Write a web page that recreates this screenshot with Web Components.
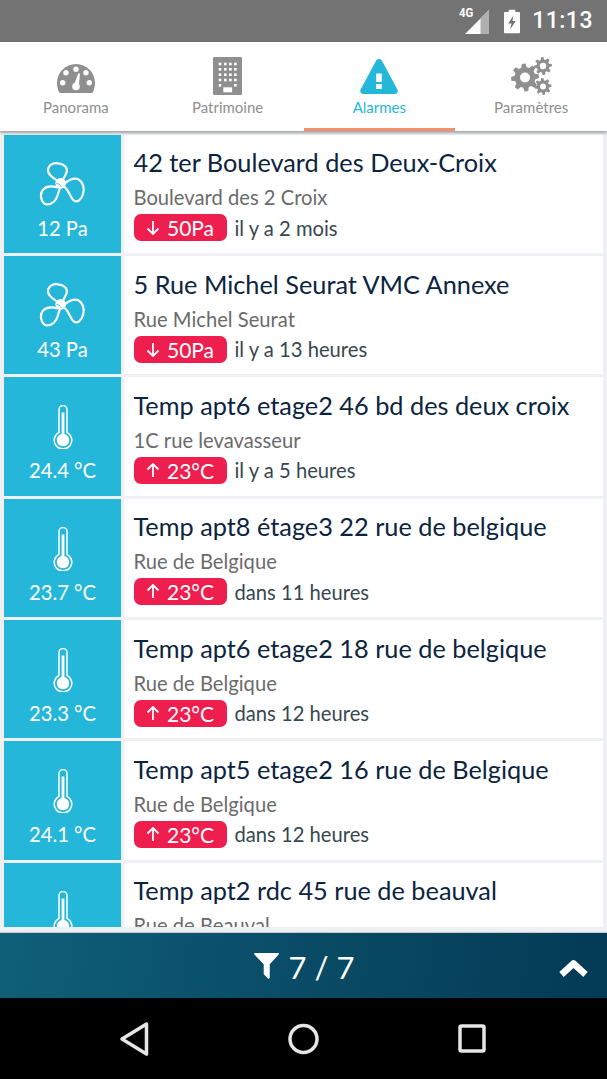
<!DOCTYPE html>
<html lang="fr"><head><meta charset="utf-8"><title>Alarmes</title>
<style>
html,body{margin:0;padding:0;height:100%;overflow:hidden}
body{width:607px;height:1079px;display:flex;flex-direction:column;font-family:Lato,"Liberation Sans",sans-serif;background:#eff0f3}
alarm-list{flex:1;min-height:0}
</style></head><body>
<status-bar></status-bar>
<tab-bar>
<tab-item label="Panorama" icon="gauge"></tab-item>
<tab-item label="Patrimoine" icon="building"></tab-item>
<tab-item label="Alarmes" icon="alert" active></tab-item>
<tab-item label="Paramètres" icon="gears"></tab-item>
</tab-bar>
<alarm-list>
<alarm-card kind="fan" value="12 Pa" title="42 ter Boulevard des Deux-Croix" sub="Boulevard des 2 Croix" dir="down" limit="50Pa" when="il y a 2 mois"></alarm-card>
<alarm-card kind="fan" value="43 Pa" title="5 Rue Michel Seurat VMC Annexe" sub="Rue Michel Seurat" dir="down" limit="50Pa" when="il y a 13 heures"></alarm-card>
<alarm-card kind="temp" value="24.4 °C" title="Temp apt6 etage2 46 bd des deux croix" sub="1C rue levavasseur" dir="up" limit="23°C" when="il y a 5 heures"></alarm-card>
<alarm-card kind="temp" value="23.7 °C" title="Temp apt8 étage3 22 rue de belgique" sub="Rue de Belgique" dir="up" limit="23°C" when="dans 11 heures"></alarm-card>
<alarm-card kind="temp" value="23.3 °C" title="Temp apt6 etage2 18 rue de belgique" sub="Rue de Belgique" dir="up" limit="23°C" when="dans 12 heures"></alarm-card>
<alarm-card kind="temp" value="24.1 °C" title="Temp apt5 etage2 16 rue de Belgique" sub="Rue de Belgique" dir="up" limit="23°C" when="dans 12 heures"></alarm-card>
<alarm-card kind="temp" title="Temp apt2 rdc 45 rue de beauval" sub="Rue de Beauval"></alarm-card>
</alarm-list>
<filter-bar></filter-bar>
<nav-bar></nav-bar>
<script>
function gear(cx,cy,ro,ri,hole,n){
  let d='';const st=Math.PI*2/n;
  for(let i=0;i<n;i++){
    const a=i*st-st/2;
    const pts=[[ri,a+st*.04],[ro,a+st*.2],[ro,a+st*.55],[ri,a+st*.71]];
    pts.forEach(([r,t],j)=>{d+=(i||j?'L':'M')+(cx+r*Math.cos(t)).toFixed(2)+' '+(cy+r*Math.sin(t)).toFixed(2)});
  }
  d+=`ZM${cx+hole} ${cy}a${hole} ${hole} 0 1 0 ${-2*hole} 0a${hole} ${hole} 0 1 0 ${2*hole} 0Z`;
  return d;
}
const bDots=[7,12.300,17.700,23].map(y=>[7,12.300,17.400,22.400].map(x=>`<rect x="${x-1.300}" y="${y-1.300}" width="2.600" height="2.600"/>`).join('')).join('')
 +[7,22.400].map(x=>`<rect x="${x-1.300}" y="27" width="2.600" height="2.600"/>`).join('');
const ICONS={
gauge:`<svg style="margin-top:4px" width="38" height="29" viewBox="0 0 38 29"><path fill="currentColor" d="M19 0C8.500 0 0 8.500 0 19c0 3 .7 6 1.700 8.500.3.8 1 1.500 1.800 1.500h31c.8 0 1.500-.7 1.800-1.500 1-2.500 1.700-5.500 1.700-8.500C38 8.500 29.500 0 19 0Z"/><g fill="#fff"><circle cx="19" cy="5.300" r="2.700"/><circle cx="9" cy="8.700" r="2.700"/><circle cx="29" cy="8.700" r="2.700"/><circle cx="5.700" cy="18.700" r="2.700"/><circle cx="32.300" cy="18.700" r="2.700"/><circle cx="19" cy="22.500" r="3.800"/><path d="M16.800 21 21.200 9.500h1.800l-1.200 12.500Z"/></g></svg>`,
building:`<svg width="29" height="38" viewBox="0 0 29 38"><rect width="29" height="38" rx="1.200" fill="currentColor"/><g fill="#fff">${bDots}<rect x="10.300" y="30.300" width="8.800" height="5"/></g></svg>`,
alert:`<svg width="38" height="35" viewBox="0 0 38 35"><path fill="currentColor" fill-rule="evenodd" d="M19 0c1.200 0 2.200.6 2.800 1.600l15.600 29c1.100 2-.3 4.400-2.600 4.400H3.200C.9 35-.5 32.600.6 30.600L16.200 1.600C16.800.6 17.800 0 19 0ZM16.200 14.500V23h5.600v-8.500ZM16.200 25v5h5.600v-5Z"/></svg>`,
gears:`<svg width="41" height="38" viewBox="0 0 41 38"><g fill="currentColor" fill-rule="evenodd"><path d="${gear(14,20.500,14,10.500,5,8)}"/><path d="${gear(32,9,9,6.500,3.200,8)}"/><path d="${gear(32,29.500,8.500,6.200,3,8)}"/></g></svg>`,
fan:`<svg width="46.700" height="45" viewBox="45 33 140 135"><g fill="none" stroke="#fff" stroke-width="6.500" stroke-linecap="round"><path d="M100 92C85 82 70 72 72 58C74 44 88 38 102 40C120 42 132 52 128 66C125 78 116 84 116 95"/><path d="M100 112C85 108 68 108 58 118C48 128 48 148 60 160C72 168 90 160 97 145C102 135 104 125 108 112"/><path d="M122 100C135 90 150 82 163 88C178 96 182 115 177 132C172 150 160 158 150 152C138 144 136 120 120 110"/></g><circle cx="110" cy="100" r="16" fill="#fff"/><path d="M97 100c6 1 12 4 15 10" stroke="#25b7d9" stroke-width="2.500" fill="none"/></svg>`,
temp:`<svg style="margin-bottom:-1px" width="20" height="44" viewBox="0 0 20 44"><path fill="none" stroke="#fff" stroke-width="1.500" d="M6 4.500a4 4 0 0 1 8 0v22.800a8.800 8.800 0 1 1-8 0Z"/><path fill="#fff" d="M8.600 7.500h2.800v21.600a6.200 6.200 0 1 1-2.800 0Z"/></svg>`
};
function def(name,css,html){
  customElements.define(name,class extends HTMLElement{
    connectedCallback(){ if(this.shadowRoot) return;
      const s=this.attachShadow({mode:'open'});
      s.innerHTML=`<style>${css}</style>`+(typeof html==='function'?html(this):html);
    }
  });
}
def('status-bar',`:host{display:flex;height:42px;flex:none;background:#737373;color:#fff;align-items:center;justify-content:flex-end;box-sizing:border-box;padding-right:14px}
.net{position:relative;width:31px;height:24px;margin-right:14px;margin-top:1px}
.g{position:absolute;left:0;top:-3px;font:700 12px/12px Roboto,sans-serif;transform:scaleX(.95);transform-origin:left top}
.bat{margin-right:12px;display:block}
.t{font:500 23px/42px Roboto,sans-serif;letter-spacing:.5px}`,
`<div class="net"><svg width="31" height="24" viewBox="0 0 31 24" style="position:absolute;left:6px;top:0"><path d="M0 24 24 0V24Z" fill="#fff"/><path d="M15.500 8.500 24 0V24H15.500Z" fill="#b0b0b0"/></svg><span class="g">4G</span></div>
<svg class="bat" width="16" height="25" viewBox="0 0 17 25"><path fill="#fff" fill-rule="evenodd" d="M5 0h7v2.500h4a1 1 0 0 1 1 1V24a1 1 0 0 1-1 1H1a1 1 0 0 1-1-1V3.500a1 1 0 0 1 1-1h4ZM10 6 4.500 14.500H8L6.500 21 12.500 12H9Z"/></svg>
<span class="t">11:13</span>`);
def('tab-bar',`:host{display:flex;height:89px;flex:none;background:#fff;box-shadow:0 1.500px 2.500px rgba(0,0,0,.32);position:relative;z-index:2}`,`<slot></slot>`);
def('tab-item',`:host{flex:1;display:flex;flex-direction:column;align-items:center;color:#8f8f8f;box-sizing:border-box;height:89px;position:relative}
.i{height:56px;box-sizing:border-box;padding-top:12px;display:flex;align-items:center;justify-content:center}
.l{font-size:15px;line-height:18px}
:host([active]){color:#25b7d9}
:host([active])::after{content:"";position:absolute;left:0;right:0;bottom:0;height:3px;background:#f0906e}`,
h=>`<div class="i">${ICONS[h.getAttribute('icon')]}</div><div class="l">${h.getAttribute('label')}</div>`);
def('alarm-list',`:host{display:block;overflow:hidden;padding:3.700px 4px 0;box-sizing:border-box;position:relative;background:#eff0f3}
.clip{height:792px;overflow:hidden;display:flex;flex-direction:column;gap:3px}`,`<div class="clip"><slot></slot></div>`);
def('alarm-card',`:host{display:flex;flex:none;height:118.330px;gap:3px;background:linear-gradient(90deg,#eff0f3 120px,#fff 120px)}
.v{width:117px;flex:none;background:#25b7d9;color:#fff;display:flex;flex-direction:column;align-items:center;font-size:20.200px}
.ic{height:71px;display:flex;align-items:flex-end;justify-content:center;margin-bottom:10px}
.m{padding-left:9.500px;min-width:0;flex:1}
.ti{font-size:25.300px;line-height:30px;margin-top:12.500px;white-space:nowrap;color:#0c2440}
.su{font-size:20.200px;line-height:24px;margin-top:8px;color:#6b6b6b;white-space:nowrap}
.r{display:flex;align-items:center;margin-top:5px;font-size:20.200px;color:#37474f}
.b{background:#ee1f4e;color:#fff;height:27px;border-radius:7px;width:93px;box-sizing:border-box;display:flex;align-items:center;justify-content:center;gap:7px;font-size:21px;margin-right:8px}`,
h=>{const a=n=>h.getAttribute(n),down=a('dir')==='down';
return `<div class="v"><div class="ic">${ICONS[a('kind')]}</div>${a('value')?`<div>${a('value')}</div>`:''}</div>
<div class="m"><div class="ti">${a('title')}</div><div class="su">${a('sub')}</div>
${a('limit')?`<div class="r"><span class="b"><svg width="14" height="15" viewBox="0 0 14 15" fill="none" stroke="#fff" stroke-width="1.800" ${down?'':'style="transform:rotate(180deg)"'}><path d="M7 1v13M1.500 8.500 7 14l5.500-5.500"/></svg>${a('limit')}</span><span>${a('when')}</span></div>`:''}</div>`});
def('filter-bar',`:host{display:flex;height:65px;flex:none;align-items:center;justify-content:center;color:#fff;background:linear-gradient(100deg,#0f6078 0%,#0a4d68 45%,#033a55 100%);position:relative;font-size:31px;box-shadow:0 -1px 1px rgba(0,0,0,.15)}
.f{margin-right:9px}
.c{padding-top:3px}
.u{position:absolute;right:18px;top:26px}`,
`<svg class="f" width="27" height="26" viewBox="0 0 27 28"><path fill="#fff" d="M1 0h25c.8 0 1.200 1 .6 1.600L17 12v14.500c0 1-1 1.500-1.800 1L10.500 23V12L.4 1.600C-.2 1 .2 0 1 0Z"/></svg><span class="c">7 / 7</span>
<svg class="u" width="31" height="20" viewBox="0 0 31 20"><path fill="none" stroke="#fff" stroke-width="6.500" stroke-linejoin="round" d="M3.500 15.500 15.500 4.500l12 11"/></svg>`);
def('nav-bar',`:host{display:flex;height:81px;flex:none;background:#000;position:relative}
svg{position:absolute;top:0;left:0}`,
`<svg width="607" height="81" viewBox="0 0 607 81" fill="none" stroke="#e6e6e6" stroke-width="3.500" stroke-linejoin="round"><path d="M146.500 26 122 41l24.500 15Z"/><circle cx="303.500" cy="41" r="13.500"/><rect x="460" y="28" width="24" height="25" rx="1.500"/></svg>`);
</script>
</body></html>
